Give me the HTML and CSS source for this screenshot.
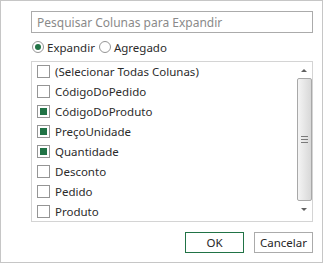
FILE: index.html
```html
<!DOCTYPE html>
<html>
<head>
  <meta charset="utf-8">
  <link rel="stylesheet" href="styles.css">
</head>
<body>
  <div class="dialog">
    <input type="text" class="search-input" placeholder="Pesquisar Colunas para Expandir" />

    <div class="mode-row">
      <label class="radio-option">
        <span class="radio checked"></span>
        <span>Expandir</span>
      </label>
      <label class="radio-option">
        <span class="radio"></span>
        <span>Agregado</span>
      </label>
    </div>

    <div class="column-list">
      <div class="column-items">
        <div class="column-item"><span class="check"></span>(Selecionar Todas Colunas)</div>
        <div class="column-item"><span class="check"></span>CódigoDoPedido</div>
        <div class="column-item"><span class="check checked"></span>CódigoDoProduto</div>
        <div class="column-item"><span class="check checked"></span>PreçoUnidade</div>
        <div class="column-item"><span class="check checked"></span>Quantidade</div>
        <div class="column-item"><span class="check"></span>Desconto</div>
        <div class="column-item"><span class="check"></span>Pedido</div>
        <div class="column-item"><span class="check"></span>Produto</div>
      </div>
      <div class="scrollbar">
        <div class="scroll-arrow up"></div>
        <div class="scroll-thumb"><span class="grip"></span></div>
        <div class="scroll-arrow down"></div>
      </div>
    </div>

    <div class="button-row">
      <button class="dialog-btn primary">OK</button>
      <button class="dialog-btn">Cancelar</button>
    </div>
  </div>
</body>
</html>
```

FILE: styles.css
```css
body {
  margin: 0;
  background: white;
  font-family: 'Noto Sans', 'Open Sans', sans-serif;
  font-size: 11.5px;
  color: #2b2b2b;
}

.dialog {
  width: 323px;
  height: 263px;
  box-sizing: border-box;
  border: 1px solid #c6c6c6;
  padding: 10px 9px 0 30px;
}

.search-input {
  display: block;
  width: 100%;
  height: 22px;
  box-sizing: border-box;
  margin: 0;
  padding: 0 5px;
  border: 1px solid #ababab;
  font-family: inherit;
  font-size: 12px;
  color: #262626;
  outline: none;
}

.search-input::placeholder {
  color: #8a8a8a;
}

.mode-row {
  display: flex;
  align-items: center;
  height: 16px;
  margin: 6px 0;
}

.radio-option {
  display: flex;
  align-items: center;
  gap: 3px;
  margin-right: 3px;
  margin-left: 1px;
}

.radio {
  width: 12px;
  height: 12px;
  box-sizing: border-box;
  border: 1px solid #959595;
  border-radius: 50%;
  display: flex;
  align-items: center;
  justify-content: center;
}

.radio.checked::after {
  content: "";
  width: 6px;
  height: 6px;
  border-radius: 50%;
  background: #217346;
}

.column-list {
  display: flex;
  height: 161px;
  box-sizing: border-box;
  border: 1px solid #d4d4d4;
}

.column-items {
  flex-grow: 1;
  margin-top: -1px;
}

.column-item {
  display: flex;
  align-items: center;
  gap: 5px;
  height: 20px;
  padding-left: 5px;
  white-space: nowrap;
}

.check {
  width: 13px;
  height: 13px;
  box-sizing: border-box;
  border: 1px solid #959595;
  display: flex;
  align-items: center;
  justify-content: center;
  flex-shrink: 0;
}

.check.checked::after {
  content: "";
  width: 7px;
  height: 7px;
  background: #217346;
}

.scrollbar {
  width: 16px;
  display: flex;
  flex-direction: column;
  align-items: center;
  background: white;
}

.scroll-arrow {
  height: 16px;
  width: 16px;
  display: flex;
  align-items: center;
  justify-content: center;
}

.scroll-arrow::after {
  content: "";
  border-left: 3px solid transparent;
  border-right: 3px solid transparent;
}

.scroll-arrow.up::after {
  border-bottom: 3px solid #606060;
}

.scroll-arrow.down::after {
  border-top: 3px solid #606060;
}

.scroll-thumb {
  width: 15px;
  height: 123px;
  box-sizing: border-box;
  border: 1px solid #a8a8a8;
  border-radius: 2px;
  background: linear-gradient(90deg, #f4f4f4 0%, #e6e6e6 50%, #d8d8d8 100%);
  display: flex;
  align-items: center;
  justify-content: center;
}

.grip {
  width: 7px;
  height: 5px;
  border-top: 1px solid #7a7a7a;
  border-bottom: 1px solid #7a7a7a;
  background: linear-gradient(#7a7a7a, #7a7a7a) center / 100% 1px no-repeat;
}

.button-row {
  display: flex;
  justify-content: flex-end;
  gap: 10px;
  margin-top: 10px;
}

.dialog-btn {
  width: 59px;
  height: 21px;
  box-sizing: border-box;
  margin: 0;
  padding: 0;
  background: white;
  border: 1px solid #ababab;
  font-family: inherit;
  font-size: 11.5px;
  color: #262626;
}

.dialog-btn.primary {
  border-color: #217346;
}
```
